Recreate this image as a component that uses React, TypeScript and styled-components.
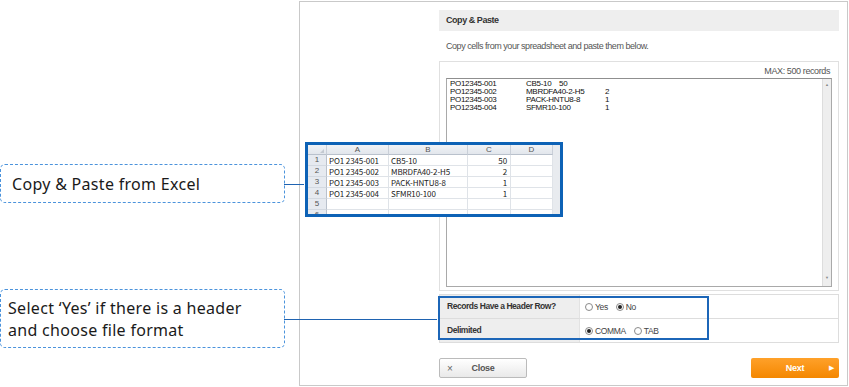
import React from "react";
import styled, { createGlobalStyle } from "styled-components";

const GlobalStyle = createGlobalStyle`
  html, body {
    margin: 0;
    padding: 0;
    background: #ffffff;
    font-family: "Liberation Sans", Arial, sans-serif;
  }
`;

const Page = styled.div`
  position: relative;
  display: flex;
  width: 849px;
  height: 387px;
  overflow: hidden;
`;

const Notes = styled.div`
  width: 299px;
  flex-shrink: 0;
  display: flex;
  flex-direction: column;
  padding-top: 164px;
  box-sizing: border-box;
`;

const Callout = styled.div<{ $h: number; $gap: number; $line: number; $pad: number }>`
  position: relative;
  width: 285px;
  height: ${(p) => p.$h}px;
  margin-top: ${(p) => p.$gap}px;
  box-sizing: border-box;
  border: 1px dashed #4b93dc;
  border-radius: 5px;
  display: flex;
  align-items: center;
  padding: 0 ${(p) => p.$pad}px;
  font-family: "Noto Sans", "Open Sans", sans-serif;
  font-size: 16px;
  letter-spacing: 0.3px;
  line-height: 22px;
  color: #1a1a1a;

  &::after {
    content: "";
    position: absolute;
    left: 100%;
    top: 50%;
    width: ${(p) => p.$line}px;
    height: 1px;
    background: #1f63b1;
  }
`;

const Panel = styled.div`
  width: 549px;
  height: 385px;
  margin-top: 1px;
  box-sizing: border-box;
  border: 1px solid #c9c9c9;
  padding: 8px 8px 0 139px;
  display: flex;
  flex-direction: column;
`;

const Header = styled.div`
  height: 21px;
  line-height: 21px;
  background: #eeeeee;
  padding-left: 7px;
  font-size: 9px;
  font-weight: bold;
  letter-spacing: -0.45px;
  color: #333;
`;

const Desc = styled.div`
  height: 30px;
  line-height: 30px;
  padding-left: 7px;
  font-size: 9px;
  letter-spacing: -0.45px;
  color: #555;
`;

const PasteBox = styled.div`
  height: 230px;
  box-sizing: border-box;
  border: 1px solid #e0e0e0;
  padding: 0 6px 3px 6px;
  display: flex;
  flex-direction: column;
`;

const MaxNote = styled.div`
  height: 16px;
  line-height: 18px;
  text-align: right;
  padding-right: 2px;
  font-size: 9px;
  letter-spacing: -0.4px;
  color: #555;
`;

const TextArea = styled.div`
  flex: 1;
  display: flex;
  border: 1px solid #a9a9a9;
  border-top-color: #8f8f8f;
  background: #fff;
`;

const Lines = styled.div`
  flex: 1;
  padding: 1px 3px;
  font-size: 8px;
  line-height: 8px;
  letter-spacing: -0.3px;
  color: #111;
`;

const Line = styled.div`
  display: flex;
  white-space: nowrap;
`;

const Cell = styled.span<{ $w: number }>`
  display: inline-block;
  width: ${(p) => p.$w}px;
`;

const ScrollTrack = styled.div`
  width: 8px;
  background: #eeeeee;
  border-left: 1px solid #dddddd;
  display: flex;
  flex-direction: column;
  justify-content: space-between;
  align-items: center;
  padding: 4px 0 6px;
  font-size: 4px;
  line-height: 4px;
  color: #888;
`;

const FormTable = styled.div`
  margin-top: 3px;
  border: 1px solid #dddddd;
  display: grid;
  grid-template-columns: 140px 1fr;
`;

const Label = styled.div<{ $last?: boolean }>`
  height: 23px;
  line-height: 23px;
  background: #eeeeee;
  padding-left: 7px;
  font-size: 8.5px;
  font-weight: bold;
  letter-spacing: -0.45px;
  color: #333;
  border-bottom: ${(p) => (p.$last ? "none" : "1px solid #dddddd")};
  border-right: 1px solid #e2e2e2;
`;

const Value = styled.div<{ $last?: boolean }>`
  height: 23px;
  display: flex;
  align-items: center;
  padding-left: 5px;
  gap: 8px;
  border-bottom: ${(p) => (p.$last ? "none" : "1px solid #dddddd")};
`;

const Option = styled.label`
  display: flex;
  align-items: center;
  gap: 2px;
  font-size: 8.5px;
  letter-spacing: -0.35px;
  color: #444;
`;

const Radio = styled.span<{ $on?: boolean }>`
  width: 8px;
  height: 8px;
  box-sizing: border-box;
  border: 1px solid #8a8a8a;
  border-radius: 50%;
  background: #fff;
  display: flex;
  align-items: center;
  justify-content: center;

  &::after {
    content: "";
    width: 4px;
    height: 4px;
    border-radius: 50%;
    background: ${(p) => (p.$on ? "#222" : "transparent")};
  }
`;

const Actions = styled.div`
  margin-top: 15px;
  display: flex;
  justify-content: space-between;
`;

const Button = styled.div<{ $primary?: boolean }>`
  position: relative;
  width: 88px;
  height: 20px;
  box-sizing: border-box;
  border-radius: 2px;
  display: flex;
  align-items: center;
  justify-content: center;
  font-size: 9px;
  font-weight: bold;
  letter-spacing: -0.3px;
  color: ${(p) => (p.$primary ? "#fff" : "#555")};
  background: ${(p) =>
    p.$primary
      ? "linear-gradient(#ffa12a, #f48700)"
      : "linear-gradient(#ffffff, #e9e9e9)"};
  border: ${(p) => (p.$primary ? "none" : "1px solid #bbbbbb")};
`;

const ButtonIcon = styled.span<{ $right?: boolean }>`
  position: absolute;
  top: 50%;
  transform: translateY(-50%);
  ${(p) => (p.$right ? "right: 5px;" : "left: 7px;")}
  font-size: ${(p) => (p.$right ? "7px" : "10px")};
  font-weight: normal;
  color: ${(p) => (p.$right ? "#fff" : "#666")};
`;

const Highlight = styled.div`
  position: absolute;
  left: 438px;
  top: 296px;
  width: 271px;
  height: 44px;
  box-sizing: border-box;
  border: 2px solid #1c66b8;
`;

const ExcelShot = styled.div`
  position: absolute;
  left: 305px;
  top: 142px;
  width: 258px;
  height: 75px;
  box-sizing: border-box;
  border: 3px solid #0d62b6;
  background: #e8ebef;
  overflow: hidden;
`;

const Sheet = styled.div`
  display: grid;
  grid-template-columns: 19px 62px 79px 43px 42px;
  grid-auto-rows: 11px;
  grid-template-rows: 10px;
  width: 245px;
  background: #fff;
  font-size: 8.5px;
  color: #222;
`;

const ColHead = styled.div`
  background: linear-gradient(#f1f3f6, #e2e6ec);
  border-right: 1px solid #c9cfd8;
  border-bottom: 1px solid #b9c1cc;
  font-size: 8px;
  line-height: 9px;
  text-align: center;
  color: #555;
  position: relative;
`;

const Corner = styled(ColHead)`
  &::after {
    content: "";
    position: absolute;
    right: 2px;
    bottom: 1px;
    border-left: 4px solid transparent;
    border-bottom: 4px solid #c3c9d1;
  }
`;

const RowHead = styled.div`
  background: #e6eaf0;
  border-right: 1px solid #b9c1cc;
  border-bottom: 1px solid #d3d9e1;
  font-size: 8px;
  line-height: 10px;
  text-align: center;
  color: #555;
`;

const XCell = styled.div<{ $num?: boolean }>`
  border-right: 1px solid #dfe3e8;
  border-bottom: 1px solid #dfe3e8;
  line-height: 11px;
  padding: 0 3px 0 2px;
  text-align: ${(p) => (p.$num ? "right" : "left")};
  white-space: nowrap;
  overflow: hidden;
  font-family: "Noto Sans CJK JP", "Liberation Sans", sans-serif;
  font-size: 8px;
  letter-spacing: -0.1px;
`;

const rows = [
  ["PO12345-001", "CB5-10", "50"],
  ["PO12345-002", "MBRDFA40-2-H5", "2"],
  ["PO12345-003", "PACK-HNTU8-8", "1"],
  ["PO12345-004", "SFMR10-100", "1"],
];

const excelRows = [
  ["PO1 2345-001", "CB5-10", "50"],
  ["PO1 2345-002", "MBRDFA40-2-H5", "2"],
  ["PO1 2345-003", "PACK-HNTU8-8", "1"],
  ["PO1 2345-004", "SFMR10-100", "1"],
  ["", "", ""],
  ["", "", ""],
];

export default function App() {
  return (
    <>
      <GlobalStyle />
      <Page>
        <Notes>
          <Callout $h={39} $gap={0} $line={20} $pad={11}>
            Copy &amp; Paste from Excel
          </Callout>
          <Callout $h={59} $gap={86} $line={153} $pad={7}>
            Select ‘Yes’ if there is a header
            <br />
            and choose file format
          </Callout>
        </Notes>

        <Panel>
          <Header>Copy &amp; Paste</Header>
          <Desc>Copy cells from your spreadsheet and paste them below.</Desc>
          <PasteBox>
            <MaxNote>MAX: 500 records</MaxNote>
            <TextArea>
              <Lines>
                {rows.map((r, i) => (
                  <Line key={i}>
                    <Cell $w={76}>{r[0]}</Cell>
                    <Cell $w={i === 0 ? 33 : 79}>{r[1]}</Cell>
                    <Cell $w={20}>{r[2]}</Cell>
                  </Line>
                ))}
              </Lines>
              <ScrollTrack>
                <span>▲</span>
                <span>▼</span>
              </ScrollTrack>
            </TextArea>
          </PasteBox>

          <FormTable>
            <Label>Records Have a Header Row?</Label>
            <Value>
              <Option>
                <Radio />
                Yes
              </Option>
              <Option>
                <Radio $on />
                No
              </Option>
            </Value>
            <Label $last>Delimited</Label>
            <Value $last>
              <Option>
                <Radio $on />
                COMMA
              </Option>
              <Option>
                <Radio />
                TAB
              </Option>
            </Value>
          </FormTable>

          <Actions>
            <Button>
              <ButtonIcon>×</ButtonIcon>
              Close
            </Button>
            <Button $primary>
              Next
              <ButtonIcon $right>▶</ButtonIcon>
            </Button>
          </Actions>
        </Panel>

        <ExcelShot>
          <Sheet>
            <Corner />
            <ColHead>A</ColHead>
            <ColHead>B</ColHead>
            <ColHead>C</ColHead>
            <ColHead>D</ColHead>
            {excelRows.map((r, i) => (
              <React.Fragment key={i}>
                <RowHead>{i + 1}</RowHead>
                <XCell>{r[0]}</XCell>
                <XCell>{r[1]}</XCell>
                <XCell $num>{r[2]}</XCell>
                <XCell />
              </React.Fragment>
            ))}
          </Sheet>
        </ExcelShot>

        <Highlight />
      </Page>
    </>
  );
}
